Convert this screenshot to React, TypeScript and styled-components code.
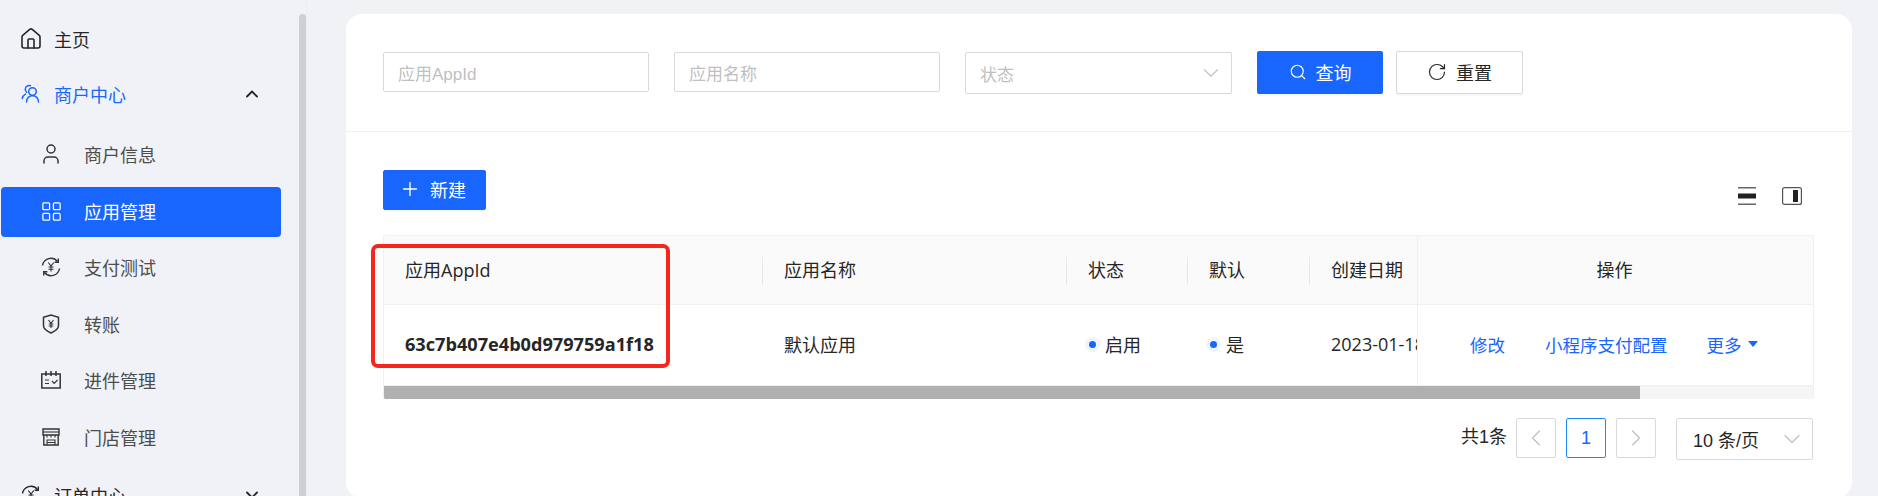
import React from "react";
import styled, { createGlobalStyle } from "styled-components";
import { ChevronDown, ChevronLeft, ChevronRight, ChevronUp, House, LayoutGrid, Plus, RotateCw, Search, User } from "lucide-react";

const BLUE = "#1966ff";
const TEXT = "#262626";
const LINE = "#f0f0f0";
const BORDER = "#d9d9d9";

const GlobalStyle = createGlobalStyle`
  html, body { margin: 0; padding: 0; height: 496px; overflow: hidden; background: #f0f2f5; }
  body { font-family: "Open Sans", "Noto Sans CJK SC", sans-serif; color: ${TEXT}; }
  * { box-sizing: border-box; }
`;

const Page = styled.div`
  display: flex;
  height: 496px;
  overflow: hidden;
`;

const Sidebar = styled.aside`
  display: flex;
  flex: none;
  width: 307px;
  height: 100%;
  background: #f0f2f7;
  border-right: 1px solid #eceef2;
  overflow: hidden;
`;

const Menu = styled.nav`
  flex: none;
  width: 299px;
  padding: 12px 0 0 1px;
  display: flex;
  flex-direction: column;
`;

const ScrollThumb = styled.div`
  flex: none;
  width: 7px;
  margin-top: 14px;
  background: #cfd0d4;
  border-radius: 4px 4px 0 0;
`;

const IconSlot = styled.span`
  display: flex;
  align-items: center;
  justify-content: center;
  flex: none;
  width: 24px;
  height: 24px;
`;

const TopItem = styled.div<{ $open?: boolean }>`
  display: flex;
  align-items: center;
  flex: none;
  width: 280px;
  height: 55px;
  padding: 0 19px 2px 18px;
  gap: 11px;
  font-size: 18px;
  color: ${(p) => (p.$open ? BLUE : TEXT)};
`;

const Arrow = styled.span`
  margin-left: auto;
  display: flex;
  color: ${TEXT};
`;

const SubList = styled.div`
  display: flex;
  flex-direction: column;
  gap: 6.5px;
  margin: 8.5px 0 5px;
`;

const SubItem = styled.div<{ $active?: boolean }>`
  display: flex;
  align-items: center;
  width: 280px;
  height: 50px;
  padding: 0 0 ${(p) => (p.$active ? 2 : 3)}px 38px;
  gap: 21px;
  font-size: 18px;
  border-radius: 4px;
  color: ${(p) => (p.$active ? "#fff" : "#4d4d4d")};
  background: ${(p) => (p.$active ? BLUE : "transparent")};
  svg { color: ${(p) => (p.$active ? "#fff" : "#333")}; }
`;

const Main = styled.main`
  flex: 1;
  min-width: 0;
  padding: 14px 26px 0 39px;
`;

const Card = styled.section`
  height: 484px;
  background: #fff;
  border-radius: 16px;
`;

const FilterBar = styled.div`
  display: flex;
  align-items: flex-start;
  height: 118px;
  padding: 37px 0 0 37px;
  border-bottom: 1px solid ${LINE};
`;

const Field = styled.div<{ $w: number; $gap: number }>`
  display: flex;
  align-items: center;
  justify-content: space-between;
  flex: none;
  width: ${(p) => p.$w}px;
  height: 40px;
  margin-top: 1px;
  margin-right: ${(p) => p.$gap}px;
  padding: 0 14px;
  border: 1px solid ${BORDER};
  border-radius: 2px;
  font-family: "Liberation Sans", "Noto Sans CJK SC", sans-serif;
  font-size: 17px;
  color: #bfbfbf;
`;

const SelectField = styled(Field)`
  height: 42px;
  padding-right: 7px;
`;

const Button = styled.button<{ $primary?: boolean; $w: number; $h?: number }>`
  display: inline-flex;
  align-items: center;
  justify-content: center;
  gap: 9px;
  flex: none;
  width: ${(p) => p.$w}px;
  height: ${(p) => p.$h ?? 43}px;
  padding: 0 0 2px;
  border: 1px solid ${(p) => (p.$primary ? BLUE : BORDER)};
  border-radius: 2px;
  background: ${(p) => (p.$primary ? BLUE : "#fff")};
  color: ${(p) => (p.$primary ? "#fff" : TEXT)};
  font-family: inherit;
  font-size: 18px;
  box-shadow: 0 2px 0 rgba(0, 0, 0, 0.03);
`;

const NewButton = styled(Button)`
  padding-right: 4px;
`;

const ButtonRow = styled.div`
  display: flex;
  gap: 13px;
`;

const TableArea = styled.div`
  padding: 38px 38px 0 37px;
`;

const ToolRow = styled.div`
  display: flex;
  justify-content: space-between;
  height: 65px;
`;

const Tools = styled.div`
  display: flex;
  align-items: flex-start;
  gap: 26px;
  padding: 17px 12px 0 0;
`;

const TableWrap = styled.div`
  position: relative;
`;

const TableBox = styled.div`
  border: 1px solid ${LINE};
  border-radius: 2px;
  border-bottom: 0;
  overflow: hidden;
`;

const Row = styled.div<{ $head?: boolean }>`
  display: flex;
  height: ${(p) => (p.$head ? 69 : 81)}px;
  background: ${(p) => (p.$head ? "#fafafa" : "#fff")};
  border-bottom: 1px solid ${LINE};
  font-size: 18px;
  color: ${TEXT};
`;

const Cell = styled.div<{ $w: number; $sep?: boolean }>`
  position: relative;
  display: flex;
  align-items: center;
  flex: none;
  width: ${(p) => p.$w}px;
  padding: 0 0 2px 21px;
  overflow: hidden;
  white-space: nowrap;
  ${(p) =>
    p.$sep &&
    `&::after {
      content: "";
      position: absolute;
      right: 0;
      top: 21px;
      height: 28px;
      width: 1px;
      background: #e8e8e8;
    }`}
`;

const AppId = styled.span`
  font-weight: 700;
  font-size: 18.15px;
`;

const FixedCell = styled.div<{ $center?: boolean }>`
  flex: 1;
  display: flex;
  align-items: center;
  justify-content: ${(p) => (p.$center ? "center" : "flex-start")};
  padding: 0 ${(p) => (p.$center ? 2 : 0)}px 2px ${(p) => (p.$center ? 0 : 52)}px;
  border-left: 1px solid ${LINE};
`;

const Dot = styled.i`
  flex: none;
  width: 7px;
  height: 7px;
  margin: 0 9px 0 1px;
  border-radius: 50%;
  background: ${BLUE};
  box-shadow: 0 0 0 4px #eff5ff;
`;

const Link = styled.a<{ $gap?: number }>`
  display: inline-flex;
  align-items: center;
  margin-right: ${(p) => p.$gap ?? 0}px;
  font-size: 17.5px;
  color: ${BLUE};
`;

const Caret = styled.i`
  width: 0;
  height: 0;
  margin-left: 6px;
  border-left: 5.5px solid transparent;
  border-right: 5.5px solid transparent;
  border-top: 6px solid ${BLUE};
`;

const ScrollTrack = styled.div`
  height: 13px;
  background: #f5f5f5;
`;

const ScrollBar = styled.div`
  width: 1256px;
  height: 100%;
  background: #b0b0b0;
`;

const Highlight = styled.div`
  position: absolute;
  left: -12px;
  top: 9px;
  width: 299px;
  height: 124px;
  border: 4px solid #f5261b;
  border-radius: 7px;
  pointer-events: none;
`;

const Pager = styled.div`
  display: flex;
  align-items: flex-start;
  justify-content: flex-end;
  margin-top: 19px;
  padding-right: 1px;
  font-family: "Liberation Sans", "Noto Sans CJK SC", sans-serif;
  font-size: 18px;
  color: ${TEXT};
`;

const Total = styled.span`
  height: 40px;
  line-height: 38px;
  margin-right: 9px;
`;

const PageBox = styled.div<{ $on?: boolean }>`
  display: flex;
  align-items: center;
  justify-content: center;
  width: 40px;
  height: 40px;
  margin-right: 10px;
  border: 1px solid ${(p) => (p.$on ? "#1e88f5" : BORDER)};
  border-radius: 2px;
  color: ${(p) => (p.$on ? BLUE : "#bfbfbf")};
`;

const SizeSelect = styled.div`
  display: flex;
  align-items: center;
  justify-content: space-between;
  width: 137px;
  height: 42px;
  margin-left: 10px;
  padding: 0 6px 0 16px;
  border: 1px solid ${BORDER};
  border-radius: 2px;
  color: ${TEXT};
  svg { color: #bfbfbf; }
`;

const MerchantIcon = () => (
  <svg width="20" height="20" viewBox="0 0 20 20" fill="none" stroke="currentColor" strokeWidth="1.5" strokeLinecap="round">
    <circle cx="11.5" cy="7.5" r="3.8" />
    <path d="M5.5 18c.3-3.6 2.6-6.2 6-6.2s5.700 2.600 6 6.200" />
    <path d="M9.500 1.800C7 .8 4.300 2.500 4.300 5.200c0 1.300.5 2.300 1.400 3.100" />
    <path d="M1.200 14.500c.4-2 1.500-3.500 3.200-4.400" />
  </svg>
);

const PayTestIcon = () => (
  <svg width="20" height="20" viewBox="0 0 20 20" fill="none" stroke="currentColor" strokeWidth="1.400">
    <path d="M1.500 8.500A8.500 8.500 0 0 1 16.500 4.500" />
    <path d="M18.500 11.500A8.500 8.500 0 0 1 3.500 15.500" />
    <path d="M17.300 1.500v3.700h-3.700M2.700 18.500v-3.700h3.700" />
    <path d="M7.300 5.500 10 9l2.700-3.500M10 9v5.500M7.500 10h5M7.500 12.300h5" strokeWidth="1.100" />
  </svg>
);

const ShieldIcon = () => (
  <svg width="18" height="20" viewBox="0 0 18 20" fill="none" stroke="currentColor" strokeWidth="1.500">
    <path d="M1.500 3.300 9 1l7.500 2.300v8.500c0 2.500-3.300 5.300-7.500 7.200-4.200-1.900-7.500-4.700-7.500-7.200z" />
    <path d="M6.500 6 9 9.300 11.500 6M9 9.300v4.700M6.700 10h4.600M6.700 12h4.600" strokeWidth="1.100" />
  </svg>
);

const OnboardIcon = () => (
  <svg width="20" height="18" viewBox="0 0 20 18" fill="none" stroke="currentColor" strokeWidth="1.500">
    <path d="M.8 3h18.400v14H.8z" />
    <path d="M5 0v5M10 0v5M15 0v5" />
    <path d="M4 9h4M4 12.500h4" strokeWidth="1.200" />
    <path d="m11 10 2.200 2.300L16.500 9" strokeWidth="1.200" />
  </svg>
);

const StoreIcon = () => (
  <svg width="18" height="18" viewBox="0 0 18 18" fill="none" stroke="currentColor" strokeWidth="1.400">
    <path d="M1 1h16v6H1zM1.800 7v10h14.400V7" />
    <path d="M1 4h16" strokeWidth="1.100" />
    <path d="M5 17v-5h8v5M5 14.500h8" strokeWidth="1.100" />
    <path d="M5 7v2.500M9 7v2.500M13 7v2.500" strokeWidth="1.100" />
  </svg>
);

const DensityIcon = () => (
  <svg width="18" height="18" viewBox="0 0 18 18">
    <rect y="0" width="18" height="1.500" fill="#666" />
    <rect y="6.500" width="18" height="5" fill="#222" />
    <rect y="16.500" width="18" height="1.500" fill="#666" />
  </svg>
);

const ColumnsIcon = () => (
  <svg width="20" height="18" viewBox="0 0 20 18">
    <rect x=".6" y=".6" width="18.800" height="16.800" rx="2" fill="#fff" stroke="#555" strokeWidth="1.200" />
    <rect x="11" y="3" width="5" height="12" fill="#222" />
  </svg>
);

const subItems = [
  { label: "商户信息", icon: <User size={24} strokeWidth={1.5} /> },
  { label: "应用管理", icon: <LayoutGrid size={23} strokeWidth={1.3} />, active: true },
  { label: "支付测试", icon: <PayTestIcon /> },
  { label: "转账", icon: <ShieldIcon /> },
  { label: "进件管理", icon: <OnboardIcon /> },
  { label: "门店管理", icon: <StoreIcon /> },
];

export default function App() {
  return (
    <Page>
      <GlobalStyle />
      <Sidebar>
        <Menu>
          <TopItem>
            <IconSlot><House size={24} strokeWidth={1.6} /></IconSlot>
            主页
          </TopItem>
          <TopItem $open>
            <IconSlot><MerchantIcon /></IconSlot>
            商户中心
            <Arrow>
              <ChevronUp size={20} strokeWidth={2.2} />
            </Arrow>
          </TopItem>
          <SubList>
            {subItems.map((item) => (
              <SubItem key={item.label} $active={item.active}>
                <IconSlot>{item.icon}</IconSlot>
                {item.label}
              </SubItem>
            ))}
          </SubList>
          <TopItem>
            <IconSlot><PayTestIcon /></IconSlot>
            订单中心
            <Arrow>
              <ChevronDown size={20} strokeWidth={2.2} />
            </Arrow>
          </TopItem>
        </Menu>
        <ScrollThumb />
      </Sidebar>
      <Main>
        <Card>
          <FilterBar>
            <Field $w={266} $gap={25}>应用AppId</Field>
            <Field $w={266} $gap={25}>应用名称</Field>
            <SelectField $w={267} $gap={25}>
              状态
              <ChevronDown size={26} strokeWidth={1} />
            </SelectField>
            <ButtonRow>
              <Button $primary $w={126}>
                <Search size={18} strokeWidth={1.5} />
                查询
              </Button>
              <Button $w={127}>
                <RotateCw size={20} strokeWidth={1.4} />
                重置
              </Button>
            </ButtonRow>
          </FilterBar>
          <TableArea>
            <ToolRow>
              <NewButton $primary $w={103} $h={40}>
                <Plus size={22} strokeWidth={1.5} />
                新建
              </NewButton>
              <Tools>
                <DensityIcon />
                <ColumnsIcon />
              </Tools>
            </ToolRow>
            <TableWrap>
              <TableBox>
                <Row $head>
                  <Cell $w={379} $sep>应用AppId</Cell>
                  <Cell $w={304} $sep>应用名称</Cell>
                  <Cell $w={121} $sep>状态</Cell>
                  <Cell $w={122} $sep>默认</Cell>
                  <Cell $w={107}>创建日期</Cell>
                  <FixedCell $center>操作</FixedCell>
                </Row>
                <Row>
                  <Cell $w={379}><AppId>63c7b407e4b0d979759a1f18</AppId></Cell>
                  <Cell $w={304}>默认应用</Cell>
                  <Cell $w={121}><Dot />启用</Cell>
                  <Cell $w={122}><Dot />是</Cell>
                  <Cell $w={107}>2023-01-18</Cell>
                  <FixedCell>
                    <Link $gap={40}>修改</Link>
                    <Link $gap={39}>小程序支付配置</Link>
                    <Link>更多<Caret /></Link>
                  </FixedCell>
                </Row>
                <ScrollTrack>
                  <ScrollBar />
                </ScrollTrack>
              </TableBox>
              <Highlight />
            </TableWrap>
            <Pager>
              <Total>共1条</Total>
              <PageBox><ChevronLeft size={28} strokeWidth={1} /></PageBox>
              <PageBox $on>1</PageBox>
              <PageBox><ChevronRight size={28} strokeWidth={1} /></PageBox>
              <SizeSelect>
                10 条/页
                <ChevronDown size={28} strokeWidth={1} />
              </SizeSelect>
            </Pager>
          </TableArea>
        </Card>
      </Main>
    </Page>
  );
}
